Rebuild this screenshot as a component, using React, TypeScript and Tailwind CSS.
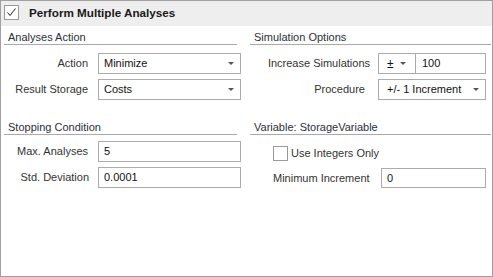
import React from 'react'

function Arrow() {
    return (
        <svg width="6" height="3" viewBox="0 0 6 3" className="shrink-0">
            <path d="M0 0 H6 L3 3 Z" fill="#555555" />
        </svg>
    )
}

function Select({ value, className }: { value: string; className: string }) {
    return (
        <div className={`h-[21px] border border-[#ababab] bg-white flex items-center justify-between pr-[6px] text-[#111] ${className}`}>
            <span>{value}</span>
            <Arrow />
        </div>
    )
}

function Input({ value, className }: { value: string; className: string }) {
    return (
        <div className={`border border-[#ababab] bg-white flex items-center pl-[5px] text-[#111] ${className}`}>
            {value}
        </div>
    )
}

function Heading({ title, className }: { title: string; className: string }) {
    return (
        <div className={`h-[19px] pt-[4px] pl-[4px] leading-[14px] border-b border-[#a9a9a9] text-[#2b2f3a] ${className}`}>
            {title}
        </div>
    )
}

export default function App() {
    return (
        <div className="w-[493px] h-[277px] border border-[#a0a0a0] bg-white flex flex-col text-[11px] text-[#333] font-['Liberation_Sans',Arial,sans-serif]">
            <div className="h-[25px] shrink-0 bg-[#eeeeee] flex items-start pt-[4px] pl-[3px]">
                <div className="w-[15px] h-[15px] border border-[#9a9a9a] bg-white flex items-center justify-center">
                    <svg width="11" height="11" viewBox="0 0 11 11">
                        <path d="M1.5 5.5 L4 8.5 L9.5 1.5" fill="none" stroke="#222" strokeWidth="1" />
                    </svg>
                </div>
                <span className="ml-[10px] text-[11.7px] leading-[15px] font-bold text-[#1a1a1a]">Perform Multiple Analyses</span>
            </div>

            <div className="flex">
                {/* left column */}
                <div className="w-[245px] shrink-0">
                    <Heading title="Analyses Action" className="ml-[3px] w-[233px]" />
                    <div className="mt-[8px] flex flex-col gap-[5px]">
                        <div className="flex items-center">
                            <span className="w-[87px] text-right">Action</span>
                            <Select value="Minimize" className="ml-[10px] w-[143px] pl-[5px]" />
                        </div>
                        <div className="flex items-center">
                            <span className="w-[87px] text-right">Result Storage</span>
                            <Select value="Costs" className="ml-[10px] w-[143px] pl-[5px]" />
                        </div>
                    </div>

                    <Heading title="Stopping Condition" className="mt-[16px] ml-[3px] w-[233px]" />
                    <div className="mt-[6px] flex flex-col gap-[5px]">
                        <div className="flex items-center">
                            <span className="w-[87px] text-right">Max. Analyses</span>
                            <Input value="5" className="ml-[10px] w-[143px] h-[21px]" />
                        </div>
                        <div className="flex items-center">
                            <span className="w-[88px] text-right">Std. Deviation</span>
                            <Input value="0.0001" className="ml-[9px] w-[143px] h-[21px]" />
                        </div>
                    </div>
                </div>

                {/* right column */}
                <div className="flex-1">
                    <Heading title="Simulation Options" className="ml-[4px] w-[241px]" />
                    <div className="mt-[8px] flex flex-col gap-[5px]">
                        <div className="flex items-center">
                            <span className="w-[124px] text-right">Increase Simulations</span>
                            <div className="ml-[8px] w-[108px] h-[21px] border border-[#ababab] bg-white flex text-[#111]">
                                <div className="w-[37px] border-r border-[#ababab] flex items-center justify-between pl-[8px] pr-[9px]">
                                    <span className="text-[12px]">±</span>
                                    <Arrow />
                                </div>
                                <div className="flex items-center pl-[6px]">100</div>
                            </div>
                        </div>
                        <div className="flex items-center">
                            <span className="w-[119px] text-right">Procedure</span>
                            <Select value="+/- 1 Increment" className="ml-[13px] w-[108px] pl-[8px]" />
                        </div>
                    </div>

                    <Heading title="Variable: StorageVariable" className="mt-[16px] ml-[4px] w-[241px]" />
                    <div className="mt-[11px] flex items-center ml-[27px] h-[15px]">
                        <div className="w-[15px] h-[15px] border border-[#9a9a9a] bg-white" />
                        <span className="ml-[3px]">Use Integers Only</span>
                    </div>
                    <div className="mt-[7px] flex items-center ml-[27px]">
                        <span className="w-[108px]">Minimum Increment</span>
                        <Input value="0" className="w-[105px] h-[20px]" />
                    </div>
                </div>
            </div>
        </div>
    )
}
